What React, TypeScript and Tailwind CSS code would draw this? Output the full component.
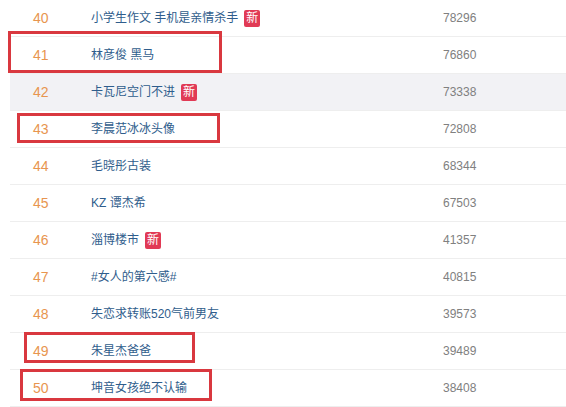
import React from "react";

const rows = [
  { rank: 40, title: "小学生作文 手机是亲情杀手", isNew: true, count: 78296 },
  { rank: 41, title: "林彦俊 黑马", isNew: false, count: 76860 },
  { rank: 42, title: "卡瓦尼空门不进", isNew: true, count: 73338, hover: true },
  { rank: 43, title: "李晨范冰冰头像", isNew: false, count: 72808 },
  { rank: 44, title: "毛晓彤古装", isNew: false, count: 68344 },
  { rank: 45, title: "KZ 谭杰希", isNew: false, count: 67503 },
  { rank: 46, title: "淄博楼市", isNew: true, count: 41357 },
  { rank: 47, title: "#女人的第六感#", isNew: false, count: 40815 },
  { rank: 48, title: "失恋求转账520气前男友", isNew: false, count: 39573 },
  { rank: 49, title: "朱星杰爸爸", isNew: false, count: 39489 },
  { rank: 50, title: "坤音女孩绝不认输", isNew: false, count: 38408 },
];

const marks = [
  "left-[8px] top-[31px] w-[214px] h-[42px]",
  "left-[17px] top-[113px] w-[203px] h-[30px]",
  "left-[24px] top-[332px] w-[171px] h-[31px]",
  "left-[20px] top-[369px] w-[192px] h-[32px]",
];

export default function App() {
  return (
    <div className="relative w-[566px] h-[407px] bg-white overflow-hidden font-['Liberation_Sans','Noto_Sans_CJK_SC',sans-serif]">
      <div className="ml-[10px]">
        {rows.map((r) => (
          <div
            key={r.rank}
            className={`flex items-center h-[37px] border-b border-[#eeeeee] ${r.hover ? "bg-[#f2f2f5]" : ""}`}
          >
            <div className="w-[81px] pl-[23px] text-[14px] text-[#e8954f]">{r.rank}</div>
            <div className="w-[352px] flex items-center gap-[6px] text-[12px] text-[#2f5d8c]">
              <span>{r.title}</span>
              {r.isNew && (
                <span className="w-[16px] h-[17px] rounded-[2px] bg-[#e13a55] text-white text-[12px] leading-[17px] text-center">
                  新
                </span>
              )}
            </div>
            <div className="text-[12px] text-[#808080]">{r.count}</div>
          </div>
        ))}
      </div>
      {marks.map((m) => (
        <div key={m} className={`absolute border-[3px] border-[#d9383f] ${m}`} />
      ))}
    </div>
  );
}
